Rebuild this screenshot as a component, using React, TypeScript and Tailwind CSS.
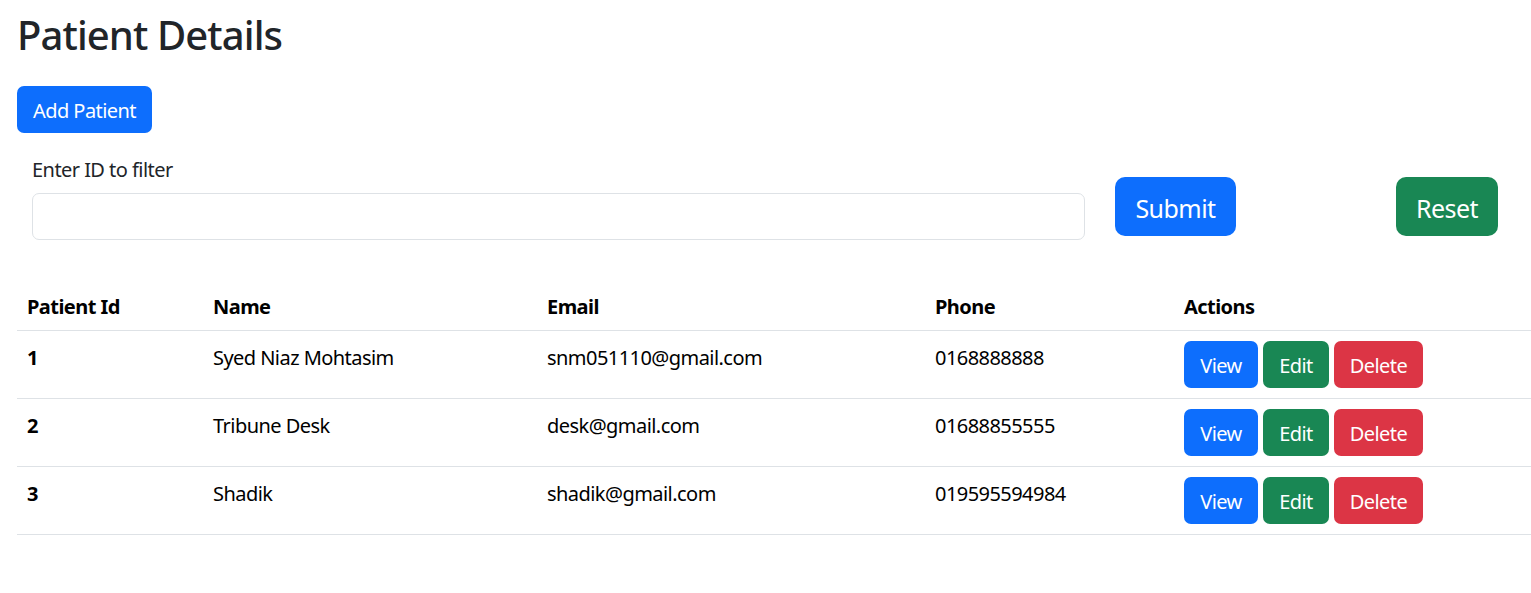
import React from "react";

const patients = [
  { id: 1, name: "Syed Niaz Mohtasim", email: "snm051110@gmail.com", phone: "0168888888" },
  { id: 2, name: "Tribune Desk", email: "desk@gmail.com", phone: "01688855555" },
  { id: 3, name: "Shadik", email: "shadik@gmail.com", phone: "019595594984" },
];

export default function App() {
  return (
    <div
      className="min-h-[593px] bg-white pl-[17px] pt-[11px] text-[20px] leading-[30px] tracking-[-0.55px] text-[#212529]"
      style={{ fontFamily: '"Segoe UI", "Noto Sans", "Open Sans", sans-serif' }}
    >
      <h1 className="mb-[9px] text-[40px] font-medium leading-[48px] tracking-[-0.9px]">Patient Details</h1>

      <button className="mt-[18px] h-[47px] w-[135px] rounded-[7px] bg-[#0d6efd] pt-[2px] text-[20px] text-white">
        Add Patient
      </button>

      {/* filter form */}
      <div className="mt-[20px] flex items-start pl-[15px]">
        <div className="w-[1053px]">
          <label className="mb-[8px] mt-[2px] block">Enter ID to filter</label>
          <input
            type="text"
            className="block h-[47px] w-full rounded-[7px] border border-[#dee2e6] px-[15px] outline-none"
          />
        </div>
        <button className="ml-[30px] mt-[24px] h-[59px] w-[121px] rounded-[10px] bg-[#0d6efd] pt-[2px] text-[25px] text-white">
          Submit
        </button>
        <button className="ml-[160px] mt-[24px] h-[59px] w-[102px] rounded-[10px] bg-[#198754] pt-[2px] text-[25px] text-white">
          Reset
        </button>
      </div>

      {/* patient table */}
      <table className="mt-[40px] w-[1514px] border-collapse text-left text-black">
        <thead>
          <tr className="border-b border-[#dee2e6]">
            <th className="w-[186px] px-[10px] pb-[8px] pt-[12px] font-bold">Patient Id</th>
            <th className="w-[334px] px-[10px] pb-[8px] pt-[12px] font-bold">Name</th>
            <th className="w-[388px] px-[10px] pb-[8px] pt-[12px] font-bold">Email</th>
            <th className="w-[249px] px-[10px] pb-[8px] pt-[12px] font-bold">Phone</th>
            <th className="px-[10px] pb-[8px] pt-[12px] font-bold">Actions</th>
          </tr>
        </thead>
        <tbody>
          {patients.map((p) => (
            <tr key={p.id} className="border-b border-[#dee2e6] align-top">
              <td className="px-[10px] pt-[12px] font-bold">{p.id}</td>
              <td className="px-[10px] pt-[12px]">{p.name}</td>
              <td className="px-[10px] pt-[12px]">{p.email}</td>
              <td className="px-[10px] pt-[12px]">{p.phone}</td>
              <td className="p-[10px]">
                <div className="flex gap-[5px]">
                  <button className="h-[47px] w-[74px] rounded-[7px] bg-[#0d6efd] pt-[2px] text-white">View</button>
                  <button className="h-[47px] w-[66px] rounded-[7px] bg-[#198754] pt-[2px] text-white">Edit</button>
                  <button className="h-[47px] w-[89px] rounded-[7px] bg-[#dc3545] pt-[2px] text-white">Delete</button>
                </div>
              </td>
            </tr>
          ))}
        </tbody>
      </table>
    </div>
  );
}
